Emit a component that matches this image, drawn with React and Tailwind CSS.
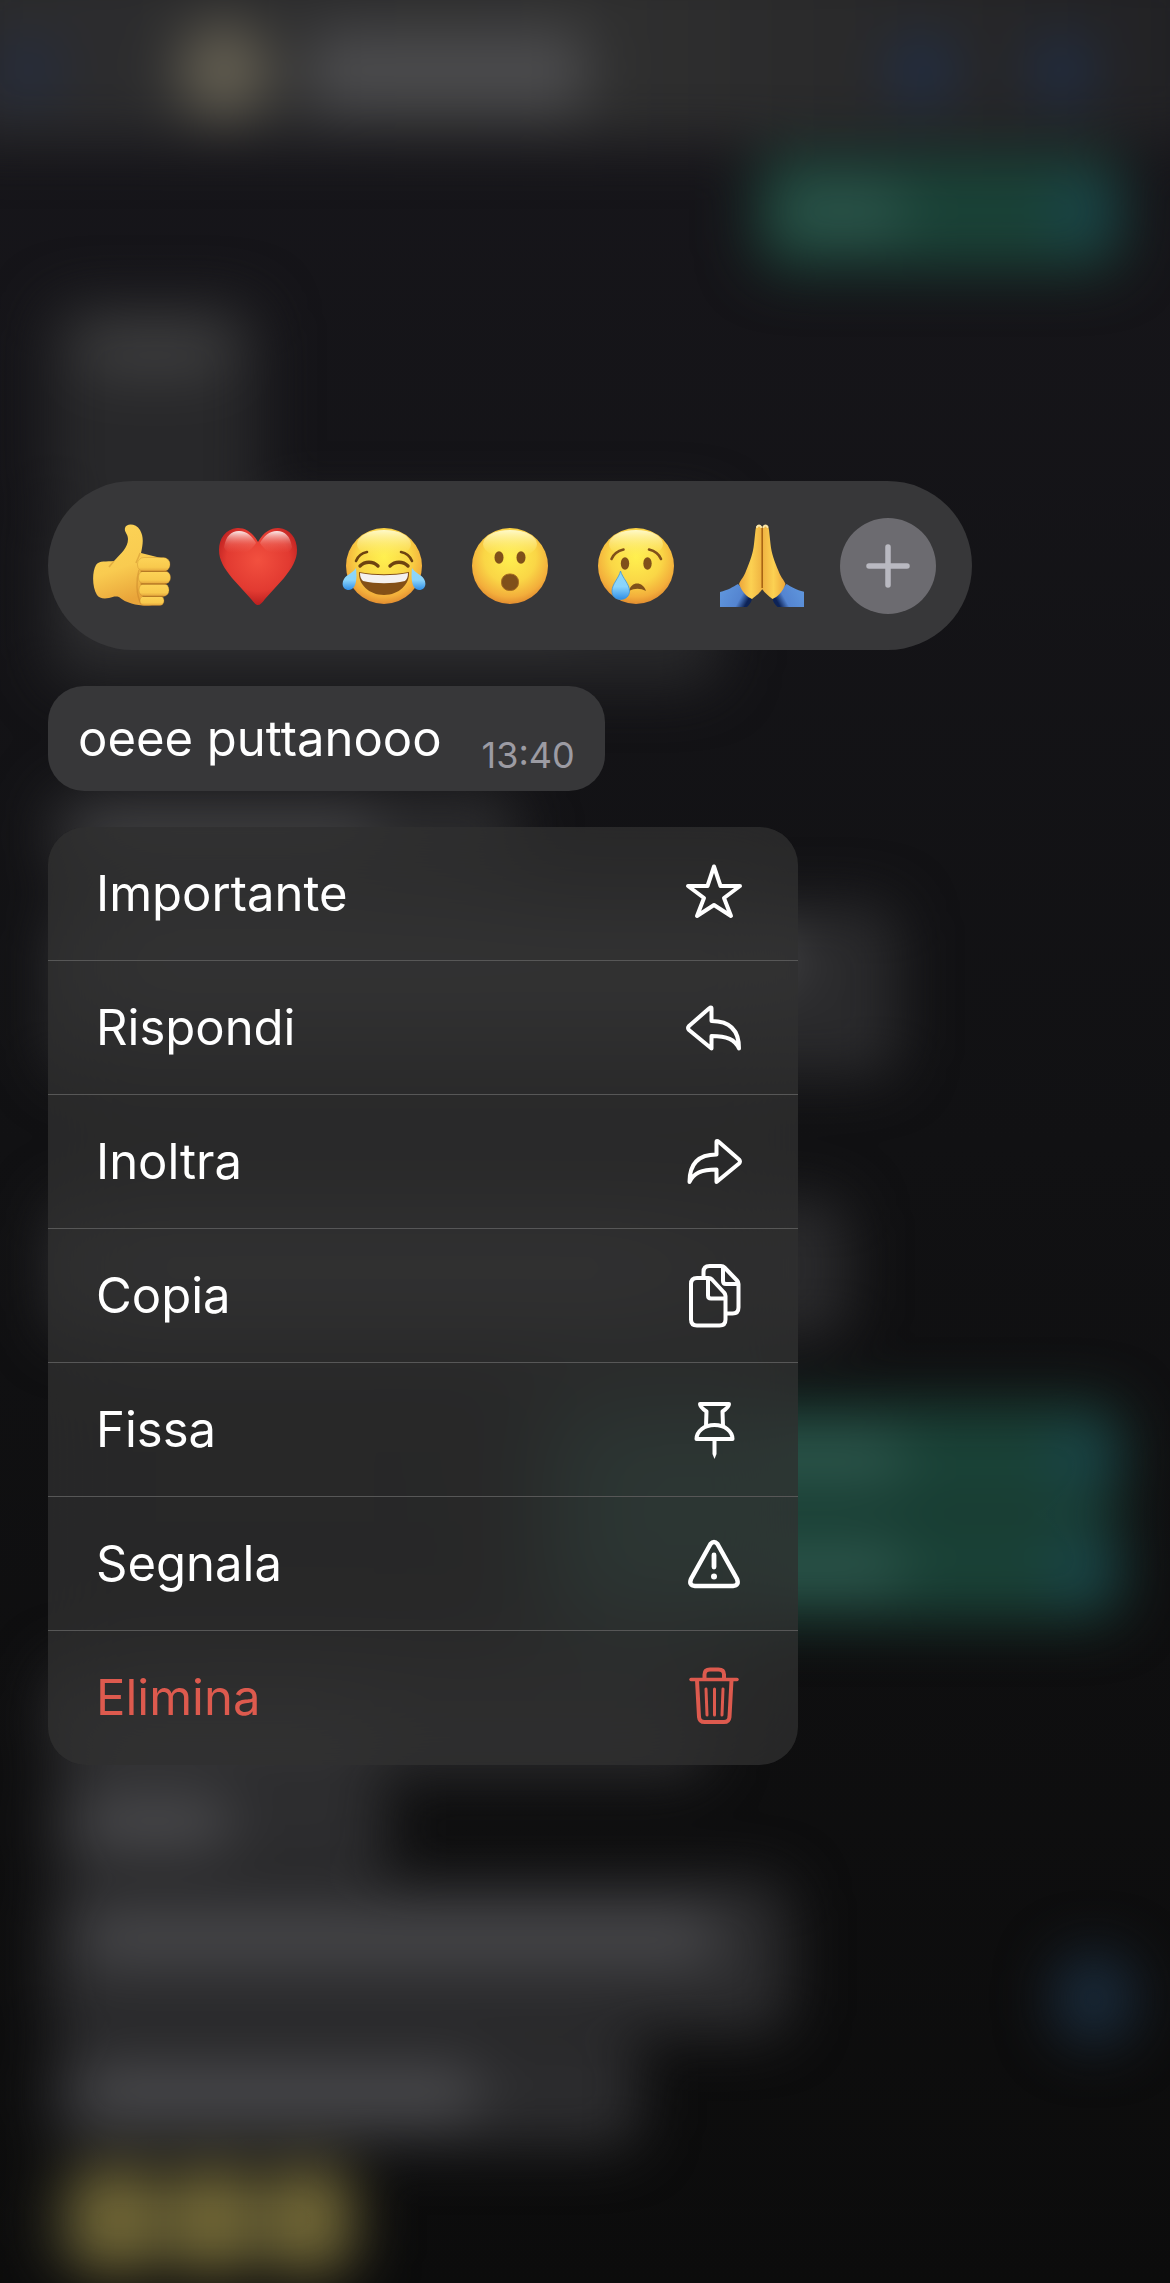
const messages = [
  { box: "mt-3 h-[116px] w-[366px] self-end bg-[#1a4237]", line: "h-11 w-[130px] ml-5 bg-[#30594f]", ticks: true },
  { box: "mt-8 h-[206px] w-[212px] bg-[#28282a]", line: "h-12 w-[150px] ml-8 -mt-28 bg-[#404041]" },
  { box: "h-[178px] w-[672px] bg-[#28282a]", line: "h-12 w-[500px] ml-8 bg-[#434345]" },
  { box: "mt-[104px] h-[90px] w-[470px] bg-[#2b2b2d]", line: "h-12 w-[300px] ml-8 bg-[#434345]" },
  { box: "mt-6 h-[172px] w-[850px] bg-[#2a2a2c]", line: "h-12 w-[720px] ml-8 -mt-16 bg-[#4e4e50]" },
  { box: "mt-[122px] h-[140px] w-[800px] bg-[#2a2a2c]", line: "h-12 w-[600px] ml-8 bg-[#434345]" },
  { box: "mt-[66px] h-[108px] w-[580px] self-end bg-[#1a4237]", line: "h-11 w-[330px] ml-8 bg-[#30594f]", ticks: true },
  { box: "mt-1 h-[104px] w-[580px] self-end bg-[#1a4237]", line: "h-11 w-[330px] ml-8 bg-[#30594f]", ticks: true },
  { box: "mt-11 h-[112px] w-[660px] bg-[#2b2b2d]", line: "h-12 w-[300px] ml-8 bg-[#3c3c3e]" },
  { box: "h-[100px] w-[340px] bg-[#2d2d2f]", line: "h-12 w-[150px] ml-8 -mt-2 bg-[#4c4c4f]" },
  { box: "mt-1 h-[154px] w-[742px] bg-[#2c2c2e]", line: "h-12 w-[640px] ml-8 -mt-10 bg-[#4b4b4e]" },
  { box: "mt-1 h-[110px] w-[592px] bg-[#2c2c2e]", line: "h-12 w-[400px] ml-8 bg-[#4d4d50]" },
];

const Backdrop = () => (
  <div className="absolute inset-0 overflow-hidden bg-linear-to-b from-[#17161b] via-[#111113] via-50% to-[#0c0c0c]" aria-hidden="true">
    <div className="absolute -inset-12 flex flex-col blur-[28px]">
      {/* Chat header */}
      <div className="flex h-[190px] shrink-0 items-center bg-linear-to-r from-[#2b2b2d] via-[#303030] to-[#212124] px-12 pt-12">
        <span className="h-16 w-14 rounded-full bg-[#232c42]" />
        <span className="ml-[122px] h-[96px] w-[92px] rounded-full bg-[#656052]" />
        <span className="ml-9 h-20 w-[280px] rounded-3xl bg-[#4c4c4e]" />
        <span className="mr-20 ml-auto h-16 w-16 rounded-full bg-[#1f2f4a]" />
        <span className="mr-20 h-16 w-14 rounded-full bg-[#1f2f4a]" />
      </div>

      {/* Conversation */}
      <div className="flex flex-col px-24">
        {messages.map((m, i) => (
          <div key={i} className={`flex shrink-0 items-center rounded-[28px] ${m.box}`}>
            <span className={`rounded-full ${m.line}`} />
            {m.ticks && <span className="mr-2 ml-auto h-16 w-16 rounded-full bg-[#19454c]" />}
          </div>
        ))}
        <div className="mt-5 w-[312px] self-start rounded-3xl bg-[#2c2b20] pl-7">
          <div className="flex gap-4">
            <span className="h-[104px] w-[80px] rounded-3xl bg-[#776c38]" />
            <span className="h-[104px] w-[80px] rounded-3xl bg-[#776c38]" />
            <span className="h-[104px] w-[80px] rounded-3xl bg-[#776c38]" />
          </div>
        </div>
      </div>

      {/* Scroll to bottom */}
      <span className="absolute right-[84px] bottom-[286px] h-[92px] w-[80px] rounded-full bg-[#1a2c3d]" />
    </div>
  </div>
);

const Face = ({ children }) => (
  <svg viewBox="0 0 84 84" className="h-[84px] w-[84px]">
    <defs>
      <radialGradient id="face" cx="50%" cy="38%" r="62%">
        <stop offset="0" stopColor="#fff04f" />
        <stop offset="0.55" stopColor="#fad646" />
        <stop offset="0.85" stopColor="#f3ae3b" />
        <stop offset="1" stopColor="#e28d30" />
      </radialGradient>
      <linearGradient id="shine" x1="0" y1="0" x2="0" y2="1">
        <stop offset="0" stopColor="#fffbd0" stopOpacity="0.95" />
        <stop offset="1" stopColor="#ffee60" stopOpacity="0" />
      </linearGradient>
      <linearGradient id="tear" x1="0" y1="0" x2="0" y2="1">
        <stop offset="0" stopColor="#8fd6f8" />
        <stop offset="0.55" stopColor="#8ad4fb" />
        <stop offset="1" stopColor="#2f8ee6" />
      </linearGradient>
    </defs>
    <circle cx="42" cy="42" r="38" fill="url(#face)" />
    <ellipse cx="42" cy="20" rx="27" ry="14" fill="url(#shine)" />
    {children}
  </svg>
);

const ThumbsUp = () => (
  <svg viewBox="0 0 84 84" className="h-[84px] w-[84px]">
    <defs>
      <linearGradient id="hand" x1="0" y1="0" x2="0.3" y2="1">
        <stop offset="0" stopColor="#fcd457" />
        <stop offset="0.6" stopColor="#f9cb50" />
        <stop offset="1" stopColor="#e9a53a" />
      </linearGradient>
      <linearGradient id="finger" x1="0" y1="0" x2="0" y2="1">
        <stop offset="0" stopColor="#fdd458" />
        <stop offset="0.7" stopColor="#f8c94d" />
        <stop offset="1" stopColor="#e2a33c" />
      </linearGradient>
    </defs>
    <path
      d="M35 4C36-1 46-1 50 6c4 7 3 14 1 23l20 5-4 46c-9 3-28 2-38-7-4-1-6 0-10 1-6 1-10 0-12-3-5-8-5-23-1-30 3-5 11-3 18-4 7-8 14-13 14-22 0-5-4-7-3-11Z"
      fill="url(#hand)"
    />
    <path d="M50 29c-1 4-3 7-4 10M49 46c-3 10-3 24 2 34M24 37l-5 6" fill="none" stroke="#b87420" strokeOpacity="0.35" strokeWidth="1.5" />
    <g fill="url(#finger)" stroke="#b77822" strokeOpacity="0.3">
      <rect x="50" y="72" width="24" height="9.5" rx="4.5" />
      <rect x="49" y="59.5" width="30" height="13" rx="6" />
      <rect x="48.5" y="47" width="32" height="13" rx="6" />
      <rect x="47.5" y="33.5" width="32.5" height="14" rx="6.5" />
    </g>
    <path d="M51 47.300h26M51 60h25M53 72.300h20" stroke="#a76a1c" strokeOpacity="0.7" strokeWidth="1.300" strokeLinecap="round" />
  </svg>
);

const Heart = () => (
  <svg viewBox="0 0 84 84" className="h-[84px] w-[84px]">
    <defs>
      <radialGradient id="heart" cx="50%" cy="42%" r="62%">
        <stop offset="0" stopColor="#f2503f" />
        <stop offset="0.65" stopColor="#e23a31" />
        <stop offset="1" stopColor="#b3191b" />
      </radialGradient>
      <linearGradient id="gloss" x1="0" y1="0" x2="0" y2="1">
        <stop offset="0" stopColor="#fff" stopOpacity="0.9" />
        <stop offset="0.6" stopColor="#f58d82" stopOpacity="0.3" />
        <stop offset="1" stopColor="#f26a5c" stopOpacity="0" />
      </linearGradient>
    </defs>
    <path
      d="M42 18C36 7 28 3.500 21 4 10 5 3 14 3 26c0 10 5 18 13 28l19 21c3 4 5 6 7 6s4-2 7-6l19-21c8-10 13-18 13-28C81 14 74 5 63 4c-7-.5-15 3-21 14Z"
      fill="url(#heart)"
    />
    <path d="M8 23C10 12 15 7 23 7s13 5 17 12c-4 6-8 10-16 10S10 30 8 23Z" fill="url(#gloss)" />
    <path d="M76 23C74 12 69 7 61 7s-13 5-17 12c4 6 8 10 16 10s14 1 16-6Z" fill="url(#gloss)" />
  </svg>
);

const Joy = () => (
  <Face>
    <g fill="none" stroke="#6d4310" strokeWidth="2.6" strokeLinecap="round">
      <path d="M14 37c2-5 6-8 11-9M70 37c-2-5-6-8-11-9" />
      <path d="M18 42c5-5 13-5 18 0M48 42c5-5 13-5 18 0" strokeWidth="3.4" />
    </g>
    <path d="M17 48c16 3 34 3 50 0 1 12-10 23-25 23S16 60 17 48Z" fill="#845016" />
    <path d="M18 49c16 3 32 3 48 0 0 4-1 6-3 8-13 3-29 3-42 0-2-2-3-4-3-8Z" fill="#f4f1ef" />
    <path d="M14 44c1 9 1 21-7 22C1 66-1 60 2 55s8-5 12-11ZM70 44c-1 9-1 21 7 22 6 0 8-6 5-11s-8-5-12-11Z" fill="url(#tear)" />
  </Face>
);

const Wow = () => (
  <Face>
    <g fill="#80501a">
      <ellipse cx="31" cy="33.500" rx="4.500" ry="6.200" />
      <ellipse cx="53" cy="33.500" rx="4.500" ry="6.200" />
      <rect x="33.500" y="50" width="17" height="16.500" rx="7.800" stroke="#a56b20" strokeWidth="1" />
    </g>
  </Face>
);

const Cry = () => (
  <Face>
    <g fill="#80501a">
      <ellipse cx="31" cy="39.500" rx="4.200" ry="6.200" />
      <ellipse cx="53.500" cy="39.500" rx="4.200" ry="6.200" />
      <path d="M35 67c2-10 14-10 17 0-6-3-11-3-17 0Z" />
    </g>
    <path d="M17.500 35c2-5 6-8 12-9.500M67 35c-2-5-6-8-12-9.500" fill="none" stroke="#80501a" strokeWidth="2.6" strokeLinecap="round" />
    <path d="M26.500 47c2 7 9 13 9 20 0 5-4 8.500-9 8.500S18 72 18 67c0-7 7-13 8.500-20Z" fill="url(#tear)" stroke="#3a94dd" strokeWidth="0.8" />
  </Face>
);

const Pray = () => (
  <svg viewBox="0 0 84 84" className="h-[84px] w-[84px]">
    <defs>
      <linearGradient id="palm" x1="0" y1="0" x2="1" y2="0">
        <stop offset="0" stopColor="#eda63a" />
        <stop offset="0.5" stopColor="#fcd152" />
        <stop offset="1" stopColor="#eeb040" />
      </linearGradient>
      <linearGradient id="sleeve" x1="0" y1="0" x2="1" y2="0.4">
        <stop offset="0" stopColor="#6199df" />
        <stop offset="0.75" stopColor="#5484d0" />
        <stop offset="1" stopColor="#0d2357" />
      </linearGradient>
    </defs>
    <g>
      <path d="M0 68c8-2 13-5 18-8l14 15c-1 4-3 6-5 8H0Z" fill="url(#sleeve)" />
      <path d="M42 3c-3-3-6-2-6.500 3L34 20c-1 10-4 17-8 27-2 6-5 8-7 13 3 8 8 13 13 15 5-4 8-6 11-11Z" fill="url(#palm)" />
    </g>
    <g transform="matrix(-1 0 0 1 84.500 0)">
      <path d="M0 68c8-2 13-5 18-8l14 15c-1 4-3 6-5 8H0Z" fill="url(#sleeve)" />
      <path d="M42 3c-3-3-6-2-6.500 3L34 20c-1 10-4 17-8 27-2 6-5 8-7 13 3 8 8 13 13 15 5-4 8-6 11-11Z" fill="url(#palm)" />
    </g>
    <path d="M42.200 4v60" stroke="#a86414" strokeWidth="1.600" />
    <path d="M37 3c1-2 3-2 4 0M43.500 3c1-2 3-2 4 0" fill="none" stroke="#fbe6a8" strokeWidth="2" strokeLinecap="round" />
  </svg>
);

const reactions = [
  { label: "Mi piace", Emoji: ThumbsUp },
  { label: "Cuore", Emoji: Heart },
  { label: "Risata", Emoji: Joy },
  { label: "Stupore", Emoji: Wow },
  { label: "Tristezza", Emoji: Cry },
  { label: "Grazie", Emoji: Pray },
];

const actions = [
  {
    label: "Importante",
    icon: <path d="M30 2.500l6.500 19.500H56L40 34l7 18L30 41l-17 11 7-18L4 22h19.500Z" />,
  },
  {
    label: "Rispondi",
    icon: <path d="M27.500 10.500V23C45 23 55 31.500 55 50.500c-4-9-12-12.500-27.500-12.500v12.500L5 32q-2-2 0-4L25 10.500q2.500-2 2.500 0Z" />,
  },
  {
    label: "Inoltra",
    icon: <path d="M32.500 10V22.500C15 22.500 5.500 31 5.500 50c4-9 12-12.500 27-12.500V50L55 31.500q2-2 0-4L35 10q-2.500-2-2.500 0Z" />,
  },
  {
    label: "Copia",
    icon: (
      <>
        <path d="M13 12h11.500q2 0 3.500 1.500l12 13q1.500 1.500 1.500 3.500V53.500q0 6-6 6H13q-6 0-6-6V18q0-6 6-6Z" />
        <path d="M24 12.500v17q0 3 3 3h14" />
        <path d="M19.500 11.500V6q0-6 6-6H37q2 0 3.500 1.500L53 14.500q1.500 1.500 1.500 3.500v23.500q0 6-6 6H42" />
        <path d="M39 1v14q0 3 3 3h12" />
      </>
    ),
  },
  {
    label: "Fissa",
    icon: (
      <>
        <path d="M16 4h29q0 3-6.500 7.500L39 26M22 26l.5-14.500Q16 7 16 4" />
        <path d="M12.500 39C12.500 31.500 20 25 30.500 25S48.500 31.500 48.500 39Z" />
        <path d="M28.500 40h4v14l-2 5-2-5Z" fill="currentColor" stroke="none" />
      </>
    ),
  },
  {
    label: "Segnala",
    icon: (
      <>
        <path d="M26.500 10q3.500-4 7 0L53 45q2.500 6.500-4 7H11q-6.500-.5-4-7Z" strokeWidth="4.500" />
        <path d="M30 21V33" strokeWidth="4.800" />
        <circle cx="30" cy="42.500" r="3" fill="currentColor" stroke="none" />
      </>
    ),
  },
  {
    label: "Elimina",
    danger: true,
    icon: (
      <>
        <path d="M7 11.500h46" strokeWidth="3.500" />
        <path d="M20.500 11V6.500q0-5 5.500-5h8.500q5.500 0 5.500 5V11" />
        <path d="M13 12l2 37q.5 5 5.500 5h19.500q5 0 5.500-5l2-37" />
        <path d="M22 21l1 26M30.500 21v26M39 21l-1 26" strokeWidth="3" />
      </>
    ),
  },
];

export default function App() {
  return (
    <main className="relative min-h-screen font-['Inter',sans-serif] text-white">
      <Backdrop />

      <div className="relative flex flex-col items-start gap-9 px-12 pt-[481px] pb-12">
        {/* Quick reactions */}
        <div className="flex h-[169px] items-center rounded-full bg-[#373739] px-[21px]">
          {reactions.map(({ label, Emoji }) => (
            <button key={label} type="button" aria-label={label} className="flex w-[126px] justify-center">
              <Emoji />
            </button>
          ))}
          <button type="button" aria-label="Altre reazioni" className="flex w-[126px] justify-center">
            <span className="flex h-24 w-24 items-center justify-center rounded-full bg-[#6c6b70]">
              <svg viewBox="0 0 44 44" className="h-11 w-11" stroke="#b9b9c1" strokeWidth="5.5" strokeLinecap="round">
                <path d="M22 3v38M3 22h38" />
              </svg>
            </span>
          </button>
        </div>

        {/* Selected message */}
        <div className="flex h-[105px] items-end gap-10 rounded-[36px] bg-[#373739] px-[30px] pb-3">
          <p className="pb-2 text-[49px] leading-[64px]">oeee puttanooo</p>
          <time className="text-[36px] leading-[48px] text-[#9c9ba3]">13:40</time>
        </div>

        {/* Context menu */}
        <div role="menu" className="w-[750px] max-w-full overflow-hidden rounded-[38px] bg-[#303030]/75 backdrop-blur-2xl">
          {actions.map((item) => (
            <button
              key={item.label}
              type="button"
              role="menuitem"
              className={`flex h-[134px] w-full items-center justify-between border-b border-[#575757] pr-[52px] pl-12 text-left text-[49px] leading-[60px] last:border-b-0 ${item.danger ? "text-[#dd5a4e]" : "text-white"}`}
            >
              {item.label}
              <svg
                viewBox="-2 -2 64 64"
                className="h-16 w-16"
                fill="none"
                stroke="currentColor"
                strokeWidth="4"
                strokeLinecap="round"
                strokeLinejoin="round"
              >
                {item.icon}
              </svg>
            </button>
          ))}
        </div>
      </div>
    </main>
  );
}
